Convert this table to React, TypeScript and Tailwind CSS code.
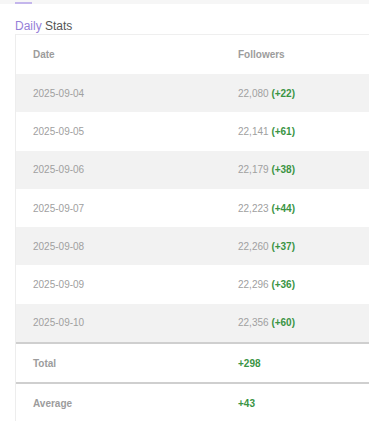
import React from "react";

const rows = [
  ["2025-09-04", "22,080", "+22"],
  ["2025-09-05", "22,141", "+61"],
  ["2025-09-06", "22,179", "+38"],
  ["2025-09-07", "22,223", "+44"],
  ["2025-09-08", "22,260", "+37"],
  ["2025-09-09", "22,296", "+36"],
  ["2025-09-10", "22,356", "+60"],
];

export default function App() {
  return (
    <div
      className="w-[369px] h-[421px] overflow-hidden bg-white"
      style={{ fontFamily: '"Liberation Sans", Arial, sans-serif' }}
    >
      <div className="h-[4px] bg-[#f6f6f6] flex items-end">
        <div className="ml-[15px] w-[17px] h-[2px] bg-[#c4b6ec]" />
      </div>
      <div className="pl-[15px] mt-[14px] h-[16px] leading-[16px] text-[12px]">
        <span className="text-[#9580d8]">Daily</span>{" "}
        <span className="text-[#555]">Stats</span>
      </div>
      <div className="ml-[15px] w-[420px] border-l border-[#ededed]">
        <div className="flex items-center h-[40px] border-t border-[#efefef] bg-white text-[10px] font-bold text-[#9c9c9c]">
          <div className="w-[222px] pl-[17px]">Date</div>
          <div>Followers</div>
        </div>
        {rows.map(([d, n, c], i) => (
          <div
            key={d}
            className={`flex items-center h-[38.3px] text-[10px] text-[#a0a0a0] ${
              i % 2 === 0 ? "bg-[#f2f2f2]" : "bg-white"
            }`}
          >
            <div className="w-[222px] pl-[17px]">{d}</div>
            <div>
              {n} <span className="text-[#3a9444] font-semibold">({c})</span>
            </div>
          </div>
        ))}
        <div className="flex items-center h-[40px] border-t-2 border-[#cfcfcf] bg-white text-[10px] font-bold">
          <div className="w-[222px] pl-[17px] text-[#9c9c9c]">Total</div>
          <div className="text-[#3a9444]">+298</div>
        </div>
        <div className="flex items-center h-[40px] border-t-2 border-[#cfcfcf] bg-white text-[10px] font-bold">
          <div className="w-[222px] pl-[17px] text-[#9c9c9c]">Average</div>
          <div className="text-[#3a9444]">+43</div>
        </div>
      </div>
    </div>
  );
}
